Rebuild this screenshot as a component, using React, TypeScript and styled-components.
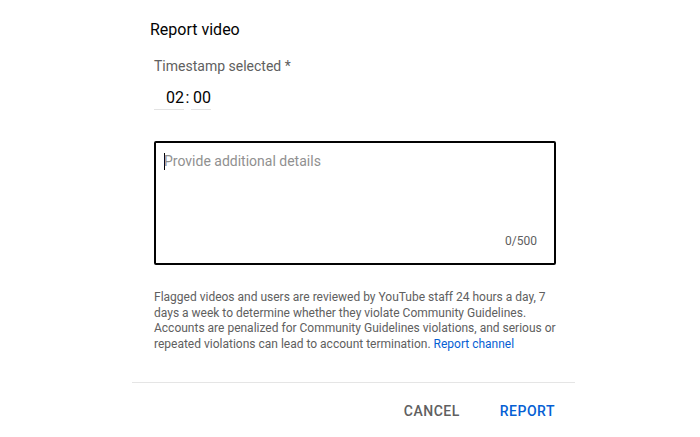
import React from "react";
import styled, { createGlobalStyle } from "styled-components";

const Global = createGlobalStyle`
  html, body { margin: 0; padding: 0; background: #fff; }
  body { font-family: Roboto, "Noto Sans", Arial, sans-serif; -webkit-font-smoothing: antialiased; }
  * { box-sizing: border-box; }
`;

const Dialog = styled.div`
  width: 443px;
  margin-left: 132px;
  display: flex;
  flex-direction: column;
`;

const Title = styled.h2`
  margin: 18px 0 0 18px;
  font-size: 16px;
  line-height: 24px;
  font-weight: 400;
  color: #030303;
`;

const Body = styled.div`
  padding: 0 19px 0 22px;
  display: flex;
  flex-direction: column;
`;

const Label = styled.div`
  margin-top: 14px;
  font-size: 14px;
  line-height: 20px;
  color: #606060;
`;

const TimeRow = styled.div`
  margin-top: 11px;
  display: flex;
  align-items: flex-start;
  font-size: 16px;
  line-height: 21px;
  color: #030303;
`;

const TimeField = styled.div<{ $w: number }>`
  width: ${(p) => p.$w}px;
  height: 23px;
  text-align: right;
  border-bottom: 1px solid #e3e3e3;
`;

const Colon = styled.span`
  width: 7px;
  text-align: center;
`;

const TextBox = styled.div`
  margin-top: 31px;
  height: 124px;
  border: 2px solid #030303;
  border-radius: 2px;
  padding: 8px 8px 0 8px;
  display: flex;
  flex-direction: column;
  justify-content: space-between;
`;

const Placeholder = styled.div`
  display: flex;
  align-items: center;
  font-size: 14px;
  line-height: 20px;
  color: #909090;
`;

const Caret = styled.span`
  width: 1px;
  height: 17px;
  background: #030303;
  margin-right: -1px;
`;

const Counter = styled.div`
  align-self: flex-end;
  margin: 0 9px 14px 0;
  font-size: 12px;
  line-height: 16px;
  color: #606060;
`;

const Notice = styled.p`
  margin: 25px 0 0;
  font-size: 12px;
  line-height: 15.7px;
  color: #606060;
`;

const Link = styled.a`
  color: #065fd4;
  text-decoration: none;
`;

const Divider = styled.div`
  margin-top: 29px;
  height: 1px;
  background: #e5e5e5;
`;

const Actions = styled.div`
  display: flex;
  justify-content: flex-end;
  gap: 0;
  padding-top: 16px;
`;

const Button = styled.button<{ $primary?: boolean }>`
  background: none;
  border: none;
  padding: 2px 20px;
  font-family: Roboto, Arial, sans-serif;
  font-size: 14px;
  line-height: 20px;
  font-weight: 500;
  letter-spacing: 0.5px;
  text-transform: uppercase;
  color: ${(p) => (p.$primary ? "#065fd4" : "#606060")};
  cursor: pointer;
`;

export default function App() {
  return (
    <>
      <Global />
      <Dialog>
        <Title>Report video</Title>
        <Body>
          <Label>Timestamp selected *</Label>
          <TimeRow>
            <TimeField $w={30}>02</TimeField>
            <Colon>:</Colon>
            <TimeField $w={20}>00</TimeField>
          </TimeRow>
          <TextBox>
            <Placeholder>
              <Caret />
              Provide additional details
            </Placeholder>
            <Counter>0/500</Counter>
          </TextBox>
          <Notice>
            Flagged videos and users are reviewed by YouTube staff 24 hours a day, 7 days a week to
            determine whether they violate Community Guidelines. Accounts are penalized for Community
            Guidelines violations, and serious or repeated violations can lead to account termination.{" "}
            <Link href="#">Report channel</Link>
          </Notice>
        </Body>
        <Divider />
        <Actions>
          <Button>Cancel</Button>
          <Button $primary>Report</Button>
        </Actions>
      </Dialog>
    </>
  );
}
